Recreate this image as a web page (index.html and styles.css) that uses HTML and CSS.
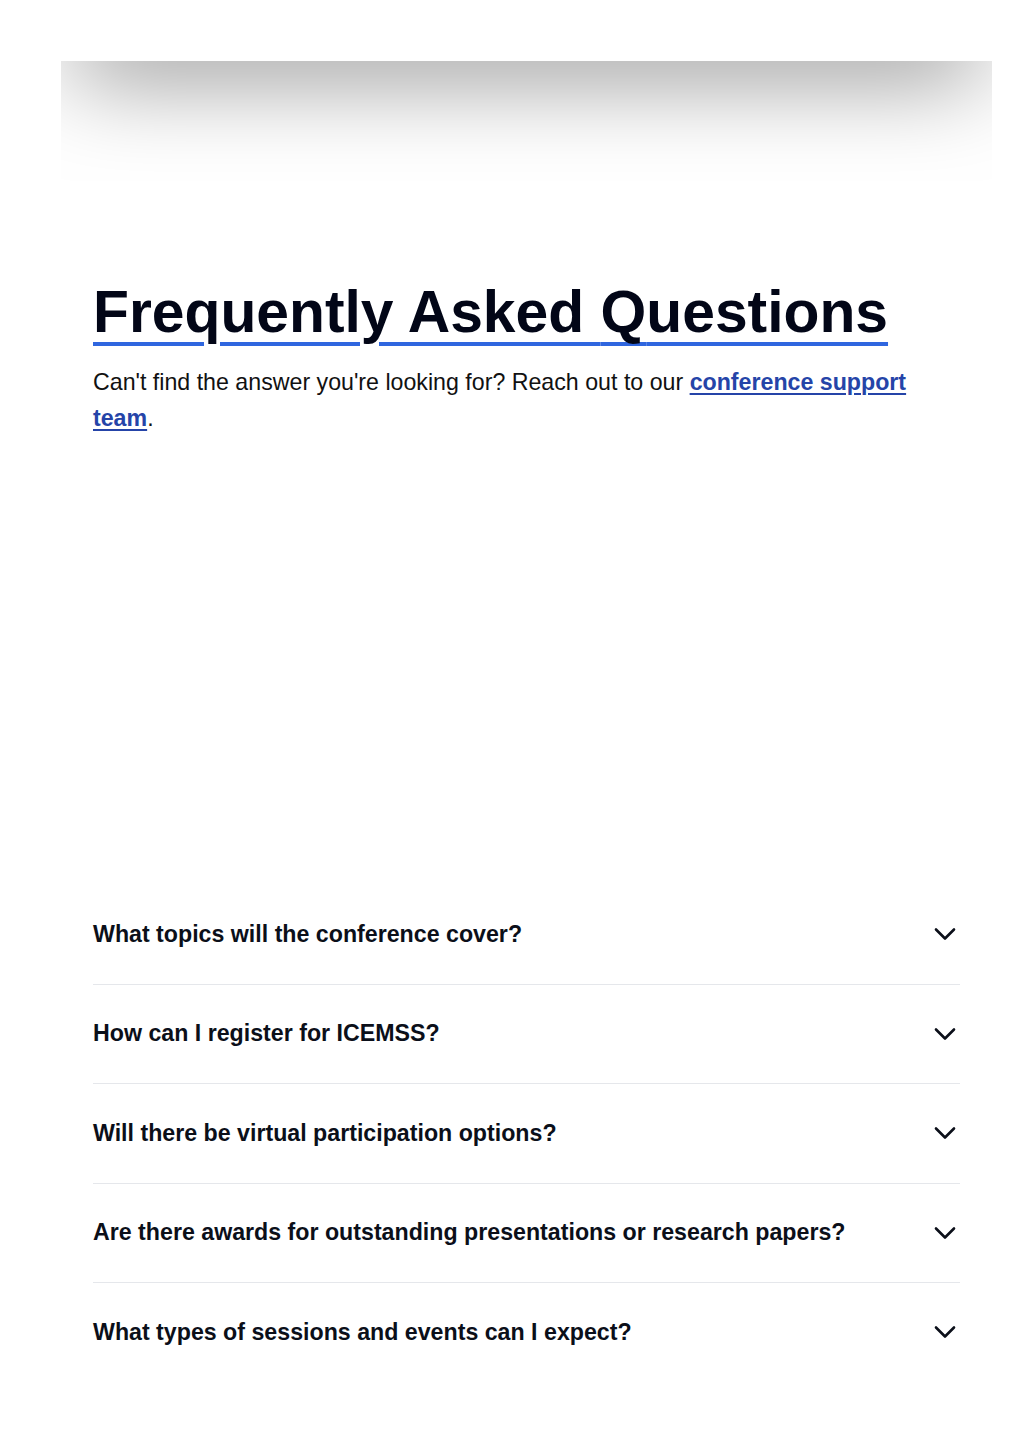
FILE: index.html
```html
<!DOCTYPE html>
<html>
<head>
	<meta charset="UTF-8">
	<title>FAQ</title>
	<link rel="stylesheet" href="styles.css">
</head>
<body>

<div class="page">
	<!-- header shadow -->
	<div class="shade"><div class="shade-bar"></div></div>

	<section class="faq">
		<h1 class="title">Frequently Asked <span class="q">Q</span>uestions</h1>
		<p class="lead">Can't find the answer you're looking for? Reach out to our <a href="#" class="lead-link">conference support team</a>.</p>

		<ul class="faq-list">
			<li class="faq-item">
				<button class="faq-q" type="button">
					<span>What topics will the conference cover?</span>
					<svg class="chev" width="24" height="24" viewBox="0 0 24 24"><path d="M3 7.5l9 9 9-9" /></svg>
				</button>
			</li>
			<li class="faq-item">
				<button class="faq-q" type="button">
					<span>How can I register for ICEMSS?</span>
					<svg class="chev" width="24" height="24" viewBox="0 0 24 24"><path d="M3 7.5l9 9 9-9" /></svg>
				</button>
			</li>
			<li class="faq-item">
				<button class="faq-q" type="button">
					<span>Will there be virtual participation options?</span>
					<svg class="chev" width="24" height="24" viewBox="0 0 24 24"><path d="M3 7.5l9 9 9-9" /></svg>
				</button>
			</li>
			<li class="faq-item">
				<button class="faq-q" type="button">
					<span>Are there awards for outstanding presentations or research papers?</span>
					<svg class="chev" width="24" height="24" viewBox="0 0 24 24"><path d="M3 7.5l9 9 9-9" /></svg>
				</button>
			</li>
			<li class="faq-item">
				<button class="faq-q" type="button">
					<span>What types of sessions and events can I expect?</span>
					<svg class="chev" width="24" height="24" viewBox="0 0 24 24"><path d="M3 7.5l9 9 9-9" /></svg>
				</button>
			</li>
		</ul>
	</section>
</div>

</body>
</html>
```

FILE: styles.css
```css
body,
h1,
p {
	margin: 0;
}
ul {
	margin: 0;
	padding: 0;
	list-style: none;
}
body {
	background: #fff;
	font-family: "Liberation Sans", Arial, sans-serif;
	color: #0b0f19;
}
.page {
	padding: 61px 32px 0 61px;
}
.shade {
	height: 120px;
	overflow: hidden;
}
.shade-bar {
	height: 40px;
	margin: -40px 24px 0;
	background: #fff;
	box-shadow: 0 0 95px 12px rgba(0, 0, 0, 0.5);
}
.faq {
	padding: 0 32px;
}
.title {
	margin-top: 96px;
	font-size: 58.8px;
	line-height: 70px;
	font-weight: 700;
	color: #020617;
	text-decoration: underline;
	text-decoration-color: #2f66df;
	text-decoration-thickness: 4px;
	text-underline-offset: 10px;
}
/* the Q tail should not cut the underline */
.title .q {
	text-decoration-skip-ink: none;
}
.lead {
	margin-top: 17px;
	font-size: 23.2px;
	line-height: 36px;
	color: #111;
}
.lead-link {
	color: #2544a8;
	font-weight: 700;
	text-decoration-thickness: 2px;
	text-underline-offset: 3px;
}
.faq-list {
	margin-top: 449px;
}
.faq-item {
	border-bottom: 1px solid #e5e7eb;
}
.faq-item:last-child {
	border-bottom: 0;
}
.faq-q {
	display: flex;
	align-items: center;
	justify-content: space-between;
	width: 100%;
	height: 98.5px;
	padding: 0;
	border: 0;
	background: none;
	font-family: inherit;
	font-size: 23.2px;
	font-weight: 700;
	color: #0b0f19;
	text-align: left;
	cursor: pointer;
}
.chev {
	flex: none;
	margin-right: 3px;
	fill: none;
	stroke: #0b0f19;
	stroke-width: 2.6;
	stroke-linecap: round;
	stroke-linejoin: round;
}
```
